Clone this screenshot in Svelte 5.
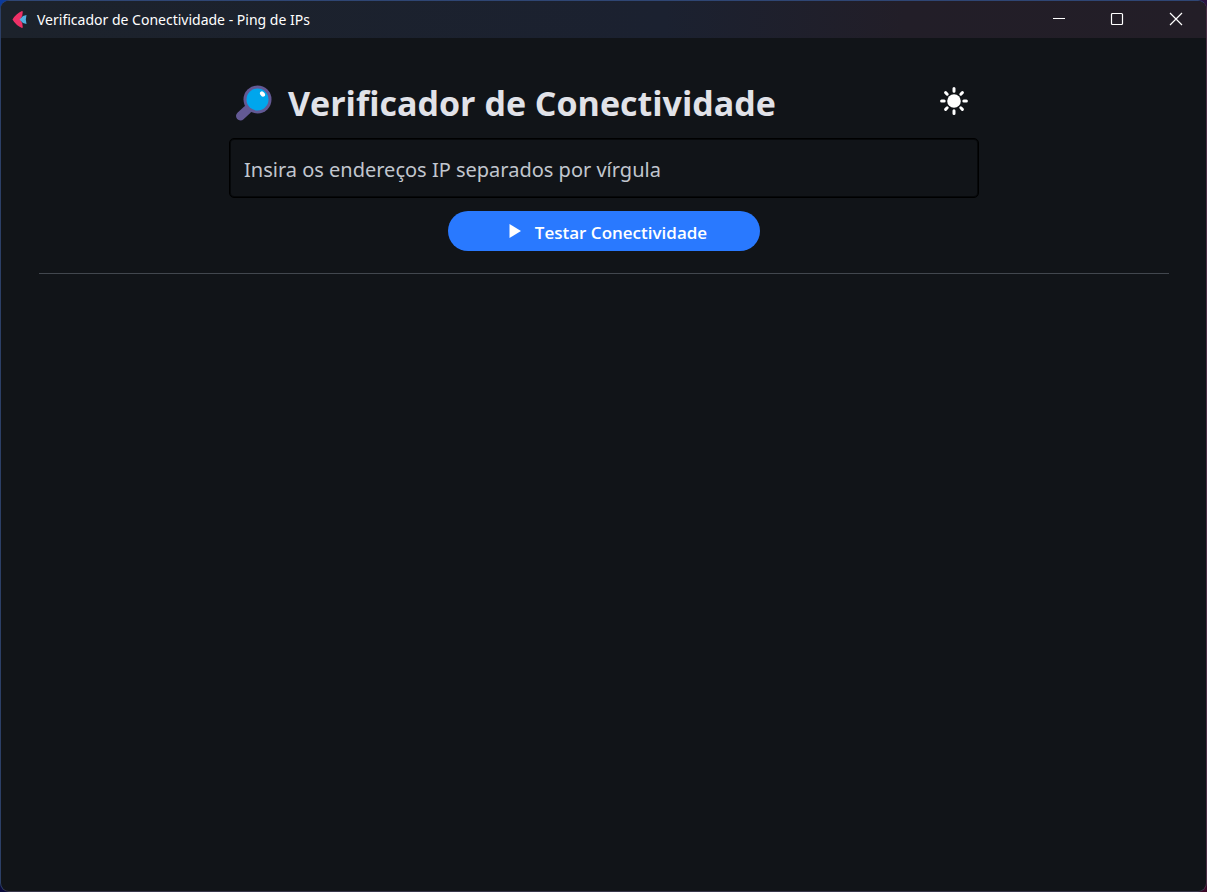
<script>
  let addresses = $state('');
</script>

<div class="desktop">
  <div class="window">
    <header class="titlebar">
      <svg class="app-logo" viewBox="0 0 16 20" aria-hidden="true">
        <path d="M0.5 10.5 Q4 4.5 10 2 L10.8 2.5 L10.3 6.5 L8.5 10.5 L10.3 14.5 L10.8 18.5 L10 19 Q4 16.5 0.5 10.5Z" fill="#ee3167" />
        <path d="M7.5 10.5 L11 7 L14.5 6 L13.8 10.5 L14.5 15 L11 14Z" fill="#54afe0" />
      </svg>
      <span class="caption">Verificador de Conectividade - Ping de IPs</span>
      <div class="controls">
        <button type="button" aria-label="Minimizar">
          <svg viewBox="0 0 14 14"><path d="M2 6.5H14" /></svg>
        </button>
        <button type="button" aria-label="Maximizar">
          <svg viewBox="0 0 14 14"><rect x="1.5" y="1.5" width="11" height="11" rx="1" /></svg>
        </button>
        <button type="button" aria-label="Fechar">
          <svg viewBox="0 0 14 14"><path d="M1 1L13 13M13 1L1 13" /></svg>
        </button>
      </div>
    </header>

    <main>
      <form onsubmit={(e) => e.preventDefault()}>
        <div class="heading">
          <div class="title">
            <svg class="lens" viewBox="0 0 36 36" aria-hidden="true">
              <path d="M4.5 31L11 25" stroke="#635994" stroke-width="9" stroke-linecap="round" />
              <path d="M10 26L14 22" stroke="#635994" stroke-width="5" />
              <circle cx="21.5" cy="14.5" r="14" fill="#635994" />
              <circle cx="21.5" cy="14.5" r="11" fill="#00a6ed" />
              <ellipse cx="26.5" cy="9" rx="2.2" ry="3" fill="#fff" transform="rotate(-38 26.5 9)" />
            </svg>
            <h1>Verificador de Conectividade</h1>
          </div>
          <button class="theme" type="button" aria-label="Alternar tema">
            <svg viewBox="0 0 28 28">
              <circle cx="14" cy="14" r="6.8" fill="#fff" />
              <path
                d="M14 1.6V4.2M14 23.8V26.4M1.6 14H4.2M23.8 14H26.4M5.6 5.6L7.2 7.2M20.8 20.8L22.4 22.4M5.6 22.4L7.2 20.8M20.8 7.2L22.4 5.6"
                stroke="#fff" stroke-width="3" stroke-linecap="round" />
            </svg>
          </button>
        </div>
        <input
          type="text"
          bind:value={addresses}
          aria-label="Insira os endereços IP separados por vírgula"
          placeholder="Insira os endereços IP separados por vírgula" />
        <button class="run" type="submit">
          <svg viewBox="0 0 12 14" aria-hidden="true"><path d="M0.5 0L12 7L0.5 14Z" fill="#fff" /></svg>
          <span>Testar Conectividade</span>
        </button>
      </form>
      <hr />
    </main>
  </div>
</div>

<style>
  :global(body) {
    margin: 0;
    background: #10143c;
  }
  .desktop,
  .desktop * {
    box-sizing: border-box;
  }
  .desktop {
    min-height: 100vh;
    display: flex;
    background: linear-gradient(90deg, #0b3a9c, #1b5a90 30%, #2a2c66 70%, #2c1440) top / 100% 50% no-repeat,
      linear-gradient(90deg, #0a0a3c, #1c1030 50%, #3c0a28);
    font-family: 'Noto Sans', 'Open Sans', sans-serif;
  }
  .window {
    flex: 1;
    display: flex;
    flex-direction: column;
    overflow: hidden;
    border: 1px solid;
    border-color: #2f4674 #4a2f45 #38364a #2c3f66;
    border-radius: 9px;
    background: #111418;
  }
  .titlebar {
    display: flex;
    align-items: center;
    height: 37px;
    padding: 0 1px 1px 11px;
    background: linear-gradient(90deg, #1c222b, #1b2130 55%, #221e28 75%, #231e27);
  }
  .app-logo {
    width: 16px;
    height: 20px;
  }
  .caption {
    flex: 1;
    padding: 1px 0 0 9px;
    font: 14px/20px 'Noto Sans', sans-serif;
    color: #fff;
  }
  button {
    padding: 0;
    border: 0;
    background: none;
    cursor: pointer;
  }
  .controls {
    display: flex;
    align-self: stretch;
  }
  .controls button {
    display: grid;
    place-items: center;
    width: 59px;
  }
  .controls svg {
    width: 14px;
    height: 14px;
    fill: none;
    stroke: #fff;
    stroke-width: 1.2;
  }
  main {
    padding: 38px 37px 38px 38px;
  }
  form {
    display: flex;
    flex-direction: column;
    align-items: center;
    max-width: 750px;
    margin: 0 auto;
  }
  .heading {
    display: flex;
    align-items: center;
    width: 100%;
    height: 50px;
    padding-left: 7px;
  }
  .title {
    flex: 1;
    display: flex;
    align-items: center;
    padding-top: 4px;
  }
  .lens {
    width: 36px;
    height: 36px;
    margin-right: 16px;
  }
  h1 {
    margin: 0;
    font: 700 34px/46px 'Open Sans', sans-serif;
    white-space: nowrap;
    color: #e1e2e8;
  }
  .theme {
    display: grid;
    place-items: center;
    width: 50px;
    height: 50px;
    border-radius: 50%;
  }
  .theme svg {
    width: 28px;
    height: 28px;
  }
  input {
    width: 100%;
    height: 60px;
    margin-top: 12px;
    padding: 2px 14px 0;
    border: 1px solid #000;
    border-radius: 5px;
    box-shadow: inset 0 0 0 1px #06080a;
    background: transparent;
    font: 20px/28px 'Noto Sans', sans-serif;
    color: #e1e2e8;
  }
  input::placeholder {
    color: #c1c6ce;
    opacity: 1;
  }
  .run {
    display: flex;
    align-items: center;
    justify-content: center;
    gap: 14px;
    width: 312px;
    max-width: 100%;
    height: 40px;
    margin-top: 13px;
    padding-left: 8px;
    border-radius: 20px;
    background: #2979ff;
    font: 600 17px/24px 'Open Sans', sans-serif;
    color: #fff;
  }
  .run svg {
    width: 12px;
    height: 14px;
  }
  .run span {
    padding-top: 3px;
  }
  hr {
    height: 1px;
    margin: 22px 0 0;
    border: 0;
    background: #42474e;
  }
</style>
